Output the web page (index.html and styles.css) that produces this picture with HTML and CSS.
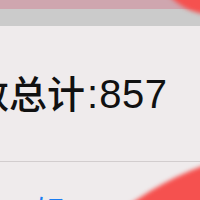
FILE: index.html
```html
<!DOCTYPE html>
<html lang="zh">
<head>
<meta charset="utf-8">
<link rel="stylesheet" href="styles.css">
</head>
<body>
<div class="screen">
  <div class="status-bar"></div>
  <div class="nav-bar"></div>
  <div class="content">
    <div class="total"><span class="cjk">数总计</span><span class="colon">:</span><span class="num">857</span></div>
    <div class="divider"></div>
    <div class="action">好</div>
  </div>
  <div class="blob blob-top"></div>
  <div class="blob blob-bottom"></div>
</div>
</body>
</html>
```

FILE: styles.css
```css
html, body {
  margin: 0;
  padding: 0;
}
body {
  background: #efebec;
  font-family: "Noto Sans CJK SC", "Noto Sans", sans-serif;
}
.screen {
  position: relative;
  width: 200px;
  height: 200px;
  overflow: hidden;
  background: #efebec;
}
.status-bar {
  height: 9px;
  background: #cfa6af;
}
.nav-bar {
  height: 17px;
  background: #cbcbcb;
}
.content {
  display: flex;
  flex-direction: column;
}
.total {
  margin-top: 43px;
  margin-left: -29px;
  height: 46px;
  line-height: 46px;
  color: #111;
  white-space: nowrap;
  font-family: "Liberation Sans", "Noto Sans CJK SC", sans-serif;
  font-size: 40px;
}
.cjk {
  font-family: "Noto Sans CJK SC", sans-serif;
  font-size: 38px;
  font-weight: 500;
}
.colon {
  margin-left: 2px;
  margin-right: 1px;
}
.num {
  font-weight: 400;
  letter-spacing: 0.5px;
}
.divider {
  margin-top: 46px;
  height: 1px;
  background: #d2cdce;
}
.action {
  margin-top: 27px;
  margin-left: 35px;
  font-size: 30px;
  line-height: 40px;
  color: #1a7cf2;
}
.blob {
  position: absolute;
  background: #f5514f;
  border-radius: 50%;
  filter: blur(2px);
}
.blob-top {
  left: 152px;
  top: -109px;
  width: 124px;
  height: 124px;
}
.blob-bottom {
  left: -6px;
  top: 146px;
  width: 640px;
  height: 640px;
}
```
